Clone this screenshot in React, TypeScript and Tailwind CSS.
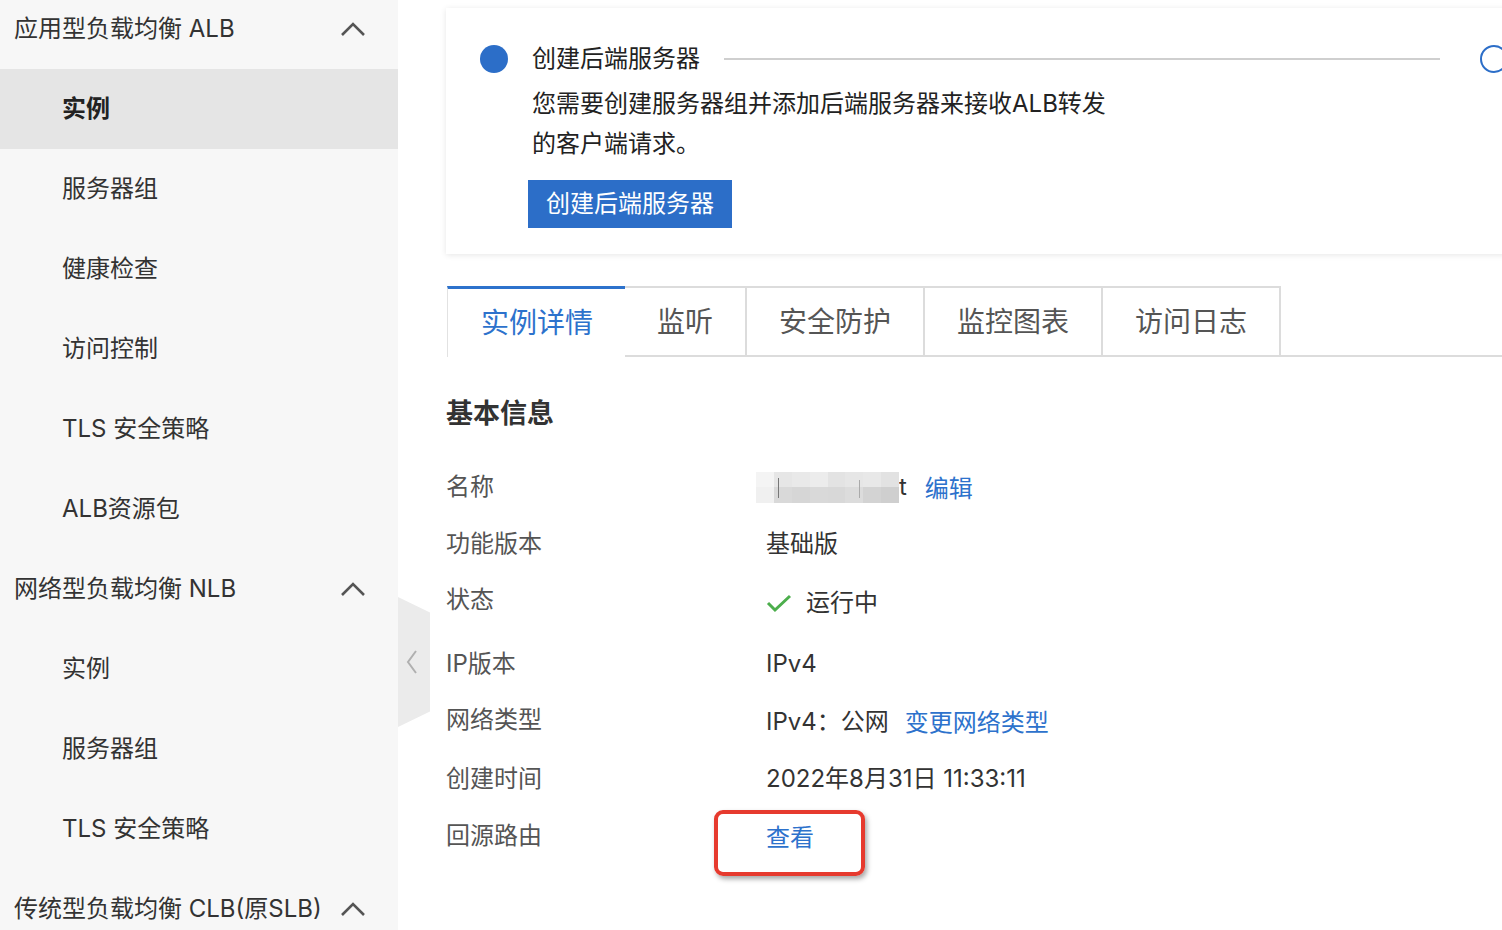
import React from "react";

const FONT = "font-['Inter','Noto_Sans_CJK_SC',sans-serif]";

type NavItem = { label: string; kind: "header" | "item"; active?: boolean };

const NAV: NavItem[] = [
  { label: "应用型负载均衡 ALB", kind: "header" },
  { label: "实例", kind: "item", active: true },
  { label: "服务器组", kind: "item" },
  { label: "健康检查", kind: "item" },
  { label: "访问控制", kind: "item" },
  { label: "TLS 安全策略", kind: "item" },
  { label: "ALB资源包", kind: "item" },
  { label: "网络型负载均衡 NLB", kind: "header" },
  { label: "实例", kind: "item" },
  { label: "服务器组", kind: "item" },
  { label: "TLS 安全策略", kind: "item" },
  { label: "传统型负载均衡 CLB(原SLB)", kind: "header" },
];

const TABS = ["实例详情", "监听", "安全防护", "监控图表", "访问日志"];

function ChevronUp() {
  return (
    <svg width="26" height="16" viewBox="0 0 26 16" fill="none">
      <polyline points="2,14 13,3 24,14" stroke="#555" strokeWidth="2.6" strokeLinejoin="miter" />
    </svg>
  );
}

function Sidebar() {
  return (
    <aside className="w-[398px] shrink-0 bg-[#f7f7f7] h-[930px] overflow-hidden">
      <div className="-mt-[11px]">
        {NAV.map((n, i) =>
          n.kind === "header" ? (
            <div key={i} className="h-20 flex items-center justify-between pl-[14px] pr-[32px] text-[24px] text-[#333]">
              <span>{n.label}</span>
              <ChevronUp />
            </div>
          ) : (
            <div
              key={i}
              className={`h-20 flex items-center pl-[62px] text-[24px] ${
                n.active ? "bg-[#e5e5e5] font-bold text-[#222]" : "text-[#333]"
              }`}
            >
              {n.label}
            </div>
          )
        )}
      </div>
    </aside>
  );
}

function BlurredName() {
  const top = ["#f4f4f4", "#e6e6e6", "#e9e9e9", "#ececec", "#e3e3e3", "#e6e6e6", "#e8e8e8", "#e2e2e2"];
  const bot = ["#f0f0f0", "#d9d9d9", "#d6d6d6", "#d9d9d9", "#d8d8d8", "#dcdcdc", "#d3d3d3", "#cfcfcf"];
  return (
    <div className="relative flex flex-col w-[143px] h-[31px] -ml-[10px]">
      <div className="flex h-1/2">
        {top.map((c, i) => (
          <div key={i} className="flex-1" style={{ background: c }} />
        ))}
      </div>
      <div className="flex h-1/2">
        {bot.map((c, i) => (
          <div key={i} className="flex-1" style={{ background: c }} />
        ))}
      </div>
      <div className="absolute left-[22px] top-[6px] w-px h-[20px] bg-[#777]" />
      <div className="absolute left-[103px] top-[8px] w-px h-[18px] bg-[#aaa]" />
    </div>
  );
}

function CheckIcon() {
  return (
    <svg width="26" height="20" viewBox="0 0 26 20" fill="none">
      <polyline points="2,10 9,17 24,3" stroke="#4cae4c" strokeWidth="3" />
    </svg>
  );
}

const ROWS: { label: string; mt: string; value: React.ReactNode }[] = [
  {
    label: "名称",
    mt: "mt-[39px]",
    value: (
      <div className="flex items-center">
        <BlurredName />
        <span className="text-[#333]">t</span>
        <span className="ml-[18px] text-[#2d72cc] mt-[4px]">编辑</span>
      </div>
    ),
  },
  { label: "功能版本", mt: "mt-[25px]", value: <span>基础版</span> },
  {
    label: "状态",
    mt: "mt-[24px]",
    value: (
      <div className="flex items-center gap-[14px] mt-[5px]">
        <CheckIcon />
        <span>运行中</span>
      </div>
    ),
  },
  { label: "IP版本", mt: "mt-[32px]", value: <span>IPv4</span> },
  {
    label: "网络类型",
    mt: "mt-[24px]",
    value: (
      <div className="flex items-center mt-[3px]">
        <span>IPv4：公网</span>
        <span className="ml-[16px] text-[#2d72cc] mt-[2px]">变更网络类型</span>
      </div>
    ),
  },
  { label: "创建时间", mt: "mt-[27px]", value: <span>2022年8月31日 11:33:11</span> },
  {
    label: "回源路由",
    mt: "mt-[25px]",
    value: (
      <div className="relative">
        <span className="text-[#2d72cc] relative top-[2px]">查看</span>
        <div className="absolute left-[-52px] top-[-8px] w-[151px] h-[66px] border-[4px] border-[#e63a2e] rounded-[9px] shadow-[2px_3px_5px_rgba(0,0,0,0.35)]" />
      </div>
    ),
  },
];

export default function App() {
  return (
    <div className={`w-[1502px] h-[930px] flex overflow-hidden bg-white relative ${FONT}`}>
      <Sidebar />

      {/* collapse handle */}
      <div className="absolute left-[398px] top-[597px] w-[32px] h-[130px] bg-[#ebebeb] [clip-path:polygon(0_0,100%_12%,100%_88%,0_100%)] flex items-center justify-center">
        <svg width="14" height="26" viewBox="0 0 14 26" fill="none" className="-ml-[4px]">
          <polyline points="11,2 3,13 11,24" stroke="#b0b0b0" strokeWidth="2" />
        </svg>
      </div>

      <main className="flex-1 pl-[48px] pt-[8px] overflow-hidden">
        {/* step card */}
        <div className="w-[1200px] bg-white shadow-[0_1px_6px_rgba(0,0,0,0.1)] pl-[34px] pt-[27px] pb-[26px]">
          <div className="flex items-center h-[48px]">
            <div className="w-[28px] h-[28px] rounded-full bg-[#2c6ec8]" />
            <span className="ml-[24px] text-[24px] text-[#222]">创建后端服务器</span>
            <div className="ml-[24px] w-[716px] h-[2px] bg-[#cfcfcf]" />
            <div className="ml-[40px] w-[28px] h-[28px] rounded-full border-[2px] border-[#2c6ec8]" />
          </div>
          <div className="pl-[52px]">
            <p className="w-[580px] text-[24px] leading-[40px] text-[#222] mt-[1px]">
              您需要创建服务器组并添加后端服务器来接收ALB转发的客户端请求。
            </p>
            <button className="-ml-[4px] mt-[16px] h-[48px] px-[18px] bg-[#2c6ec8] text-white text-[24px]">
              创建后端服务器
            </button>
          </div>
        </div>

        {/* tabs */}
        <div className="mt-[32px] flex h-[71px]">
          {TABS.map((t, i) =>
            i === 0 ? (
              <div
                key={t}
                className="ml-px pl-[33px] pr-[32px] flex items-center text-[28px] text-[#2d72cc] border-t-[3px] border-t-[#2d72cc] border-l border-l-[#e2e2e2]"
              >
                {t}
              </div>
            ) : (
              <div
                key={t}
                className="px-[32px] flex items-center text-[28px] text-[#555] border-t-2 border-r-2 border-b-2 border-[#dcdcdc]"
              >
                {t}
              </div>
            )
          )}
          <div className="flex-1 border-b-2 border-[#dcdcdc]" />
        </div>

        <h2 className="mt-[39px] h-[36px] flex items-center text-[27px] font-bold text-[#333]">基本信息</h2>

        <div className="flex flex-col">
          {ROWS.map((r) => (
            <div key={r.label} className={`${r.mt} h-[32px] flex items-center text-[24px]`}>
              <div className="w-[320px] text-[#555]">{r.label}</div>
              <div className="text-[#333]">{r.value}</div>
            </div>
          ))}
        </div>
      </main>
    </div>
  );
}
